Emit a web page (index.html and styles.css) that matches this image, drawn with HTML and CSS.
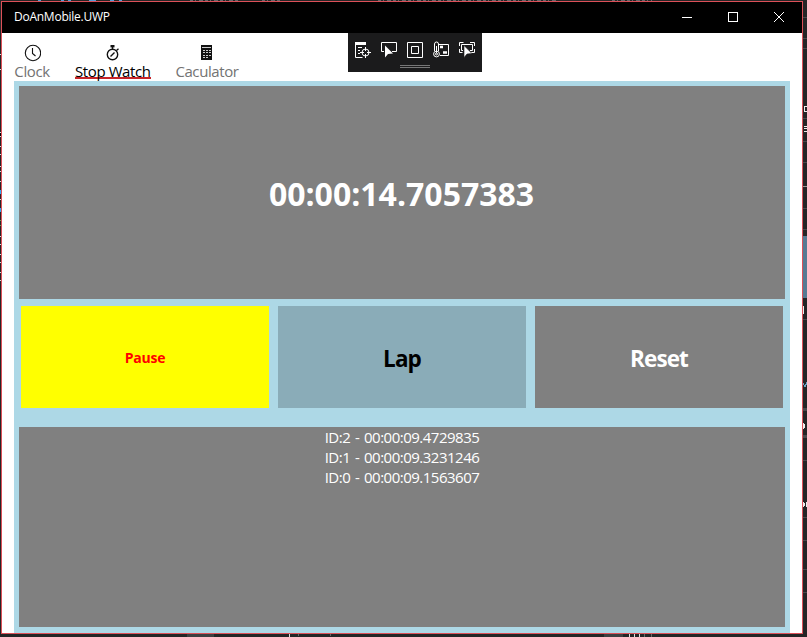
FILE: index.html
```
<!DOCTYPE html>
<html lang="en">
<head>
<meta charset="utf-8">
<title>DoAnMobile.UWP</title>
<link rel="stylesheet" href="styles.css">
</head>
<body>
<svg class="backdrop" width="807" height="637" shape-rendering="crispEdges" aria-hidden="true">
  <rect width="807" height="637" fill="#252526"/>
  <path d="M38 0h3M61 0h3M68 0h3M89 0h7M110 0h4M119 0h3" stroke="#569cd6" stroke-width="2"/>
  <path d="M190 0h50M262 0h20M378 0h180M612 0h40" stroke="#66666a" stroke-width="2" stroke-dasharray="3 2 1 3 4 2"/>
  <path d="M0 54.500h1M0 69.500h1M0 132h1v4h-1M0 146.500h1M0 154.500h1M0 166.500h1M0 171.500h1M0 181.500h1M0 199.500h1M0 236.500h1M0 244.500h1M0 254.500h1M0 262.500h1M0 272.500h1M0 280.500h1" stroke="#ddd"/>
  <path d="M0 190h1v4h-1zM0 208h1v4h-1z" fill="#30a8f5"/>
  <path d="M0 220h1M0 225h1" stroke="#6a9955"/>
  <path d="M803 17.500h4M803 38.500h4M803 48.500h4M803 118.500h4M803 141.500h4M803 162.500h4M803 208.500h4M803 229.500h4M803 319.500h4M803 460.500h4M803 517.500h4M803 540.500h4M803 569.500h4M803 592.500h4" stroke="#48484b"/>
  <path d="M803 186.500h4" stroke="#999"/>
  <rect x="803" y="236" width="4" height="62" fill="#567a93"/>
  <rect x="803" y="408" width="4" height="3" fill="#48484b"/>
  <rect x="803" y="435" width="4" height="3" fill="#48484b"/>
  <path d="M804 106.500h3M804 111.500h3M804.500 106v6M804 126.500h3M804 128.500h3M804 131.500h3M803.500 306v8M803.500 423v6M804.500 424v4M803.500 502v5M804.500 503v3M806.500 502v5" fill="none" stroke="#eee"/>
  <path d="M803 383l2 4 2-5" fill="none" stroke="#6ba4c4"/>
  <path d="M187 634h27v3h-27zM604 634h19v3h-19z" fill="#3e3e40"/>
  <path d="M289.500 634v3M629.500 634v3M634.500 634v3M639.500 634v3" stroke="#ddd"/>
  <path d="M298.500 634v2M330.500 634v2M644.500 634v3M651.500 634v3" stroke="#666"/>
</svg>
<div class="window">
  <header class="titlebar">
    <span class="title">DoAnMobile.UWP</span>
    <svg width="138" height="31" fill="none" stroke="#fff" aria-hidden="true">
      <path d="M18 15.500h10M64.500 10.500h9v9h-9z" shape-rendering="crispEdges"/>
      <path d="M110 10l10 10M120 10l-10 10"/>
    </svg>
  </header>
  <nav class="tabs">
    <a class="tab tab-clock">
      <svg width="18" height="18" fill="none" stroke="#111" stroke-width="1.100"><circle cx="10" cy="9" r="7.700"/><path d="M9.500 4v5.500l3 2.500"/></svg>
      <span>Clock</span>
    </a>
    <a class="tab tab-stop active">
      <svg width="18" height="18" fill="none" stroke="#111" stroke-width="1.400"><circle cx="8.500" cy="10.500" r="5.200"/><path d="M8.500 5V2M12.500 6.500l2-1.700M6.500 12.500l4-4"/><path d="M6.500 2.200h4" stroke-width="2.400"/></svg>
      <span>Stop Watch</span>
    </a>
    <a class="tab tab-calc">
      <svg width="18" height="18" shape-rendering="crispEdges"><path d="M3 1h11v15H3z" fill="#111"/><path d="M4 3.500h9" stroke="#ccc"/><path d="M5 6.500h2M8 6.500h2M11 6.500h2M5 8.500h2M8 8.500h2M11 8.500h2M5 11.500h2M8 11.500h2M11 11.500h2M5 13.500h2M8 13.500h2" stroke="#ccc"/></svg>
      <span>Caculator</span>
    </a>
  </nav>
  <main class="page">
    <section class="display"><span>00:00:14.7057383</span></section>
    <div class="actions">
      <button class="pause"><span>Pause</span></button>
      <button class="lap"><span>Lap</span></button>
      <button class="reset"><span>Reset</span></button>
    </div>
    <ul class="laps">
      <li>ID:2 - 00:00:09.4729835</li>
      <li>ID:1 - 00:00:09.3231246</li>
      <li>ID:0 - 00:00:09.1563607</li>
    </ul>
  </main>
</div>
<div class="debugbar">
  <svg width="134" height="39" fill="none" stroke="#fff" aria-hidden="true">
    <path d="M7 10.500h11" stroke-width="3"/>
    <path d="M7.500 9v15.500h7M10 14.500h4M10 17.500h2M10 20.500h2"/>
    <circle cx="17.500" cy="19.500" r="3.500"/><path d="M17.500 14v4M17.500 21v4M12 19.500h4M19 19.500h4"/>
    <path d="M36 18.500h-2.500v-9h15v9H44"/>
    <path d="M37 12.500v12l3-3.500 5-.5z" fill="#fff" stroke="none"/>
    <path d="M59.500 9.500h15v15h-15zM63.500 13.500h7v7h-7z"/>
    <path d="M91 11.500h9.500v11H92"/>
    <path d="M92 14h3M95 19.500h4" stroke-width="2.500"/>
    <path d="M86.500 18v-7a2 2 0 0 1 4 0v7"/><circle cx="88.500" cy="21" r="2.900"/><circle cx="88.500" cy="21" r="1"/><path d="M88.500 13v7"/>
    <path d="M111.500 13V9.500h4M122 9.500h4.500V13M126.500 16v3.500H123M111.500 16v3.500h3M115 17.500h-1.500v-6h11v6H122"/>
    <path d="M116 12.500v12l3-3.500 5-.5z" fill="#fff" stroke="#1b1b1c" stroke-width=".6"/>
    <path d="M52 32.500h30M52 34.500h30" stroke="#777"/>
  </svg>
</div>
</body>
</html>
```
FILE: styles.css
```
* { box-sizing: border-box; }
body {
  margin: 0;
  width: 807px;
  height: 637px;
  overflow: hidden;
  font-family: "Open Sans", "Noto Sans", sans-serif;
  padding: 1px 0 0 1px;
}
.backdrop { position: absolute; left: 0; top: 0; z-index: -1; }
.window {
  width: 802px;
  height: 633px;
  border: 1px solid #dc5058;
  background: #fff;
  display: flex;
  flex-direction: column;
}
.titlebar {
  height: 31px;
  flex: none;
  background: #000;
  color: #fff;
  display: flex;
  justify-content: space-between;
  padding-left: 12px;
}
.title { font-size: 12px; line-height: 30px; letter-spacing: -0.25px; }
.tabs { height: 48px; flex: none; display: flex; padding: 11px 0 0 12px; gap: 24px; }
.tab { height: 37px; display: flex; flex-direction: column; align-items: center; color: #737373; }
.tab svg { display: block; flex: none; }
.tab span { font-size: 15px; line-height: 18px; letter-spacing: -0.4px; height: 18px; white-space: nowrap; }
.tab-clock { width: 36px; margin-right: 1px; }
.tab-stop { width: 76px; }
.tab-calc { width: 64px; }
.tab.active { color: #000; height: 35px; }
.tab.active span { width: 76px; height: 17px; border-bottom: 2px solid #c72428; }
.page {
  flex: 1;
  margin: 0 12px;
  padding: 5px 5px 6px;
  background: #add8e6;
  display: flex;
  flex-direction: column;
}
.display {
  height: 213px;
  padding: 2px 1px 0 0;
  background: #808080;
  color: #fff;
  display: flex;
  justify-content: center;
  align-items: center;
  font-size: 32px;
  font-weight: 700;
}
.actions { display: grid; grid-template-columns: repeat(3, 248px); gap: 9px; height: 102px; margin: 7px 2px 19px; }
.actions button { border: 0; padding: 3px 0 0; font-family: inherit; font-weight: 700; font-size: 22.5px; letter-spacing: -0.9px; }
.actions .pause { padding: 0; background: yellow; color: red; font-size: 14px; letter-spacing: -0.2px; }
.lap { background: #8aacb8; color: #000; }
.reset { background: #808080; color: #fff; }
.laps {
  height: 200px;
  margin: 0;
  padding: 0;
  list-style: none;
  background: #808080;
  color: #fff;
  text-align: center;
  font-size: 15px;
  line-height: 20px;
  letter-spacing: -0.5px;
  word-spacing: 1.3px;
}
.debugbar { position: absolute; left: 348px; top: 33px; width: 134px; height: 39px; background: #1b1b1c; }
```
